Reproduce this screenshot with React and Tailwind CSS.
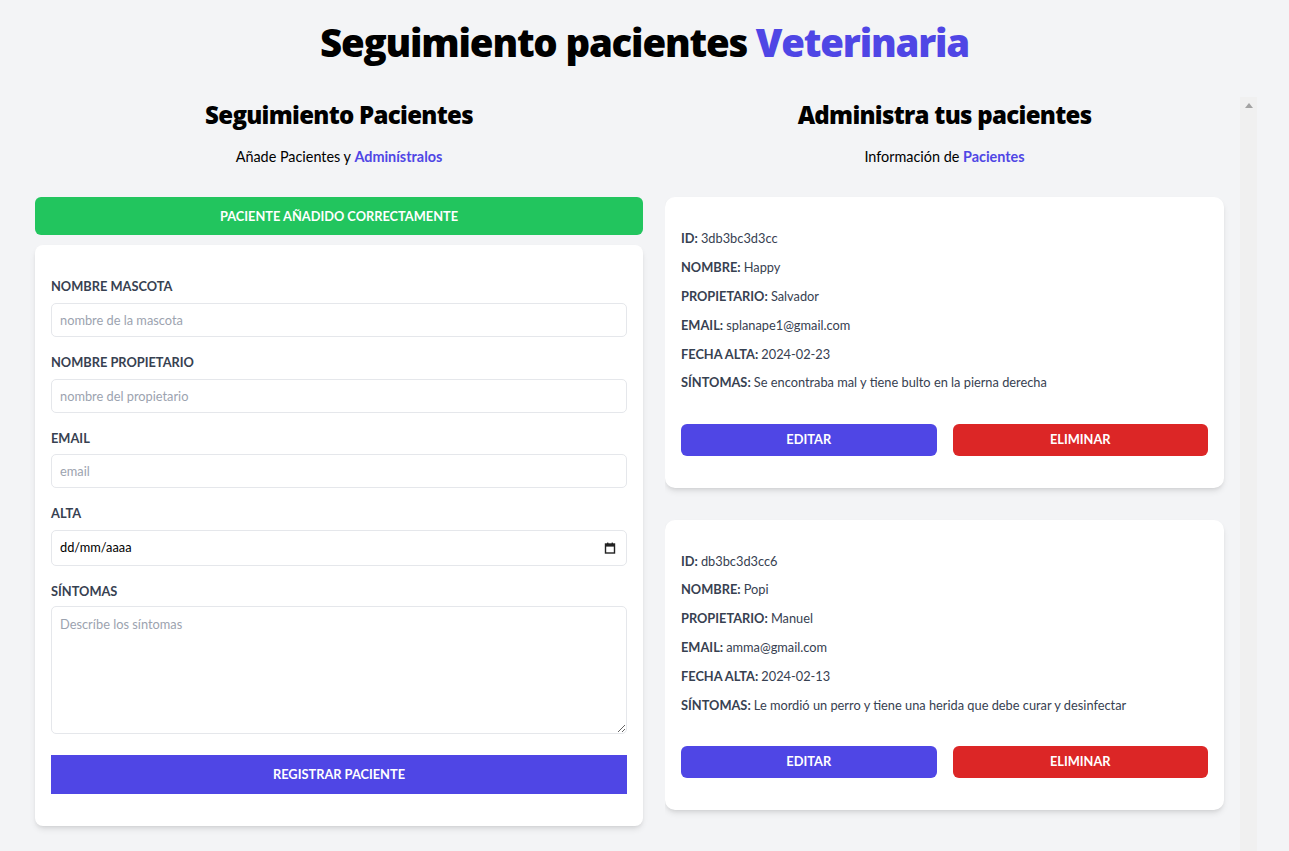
const pacientes = [
  {
    id: '3db3bc3d3cc',
    nombre: 'Happy',
    propietario: 'Salvador',
    email: 'splanape1@gmail.com',
    fecha: '2024-02-23',
    sintomas: 'Se encontraba mal y tiene bulto en la pierna derecha',
  },
  {
    id: 'db3bc3d3cc6',
    nombre: 'Popi',
    propietario: 'Manuel',
    email: 'amma@gmail.com',
    fecha: '2024-02-13',
    sintomas: 'Le mordió un perro y tiene una herida que debe curar y desinfectar',
  },
];

const heading = { fontFamily: '"Open Sans", Lato, sans-serif' };

function Field({ label, children }) {
  return (
    <div className="mb-4">
      <label className="block text-[12.8px] leading-[19.2px] font-bold uppercase text-[#374151]">
        {label}
      </label>
      {children}
    </div>
  );
}

function Paciente({ p }) {
  const rows = [
    ['ID', p.id],
    ['Nombre', p.nombre],
    ['Propietario', p.propietario],
    ['Email', p.email],
    ['Fecha Alta', p.fecha],
    ['Síntomas', p.sintomas],
  ];
  return (
    <div className="mb-8 rounded-[10px] bg-white px-4 pt-8 pb-8 shadow-md">
      {rows.map(([k, v]) => (
        <p
          key={k}
          className="mb-[9.6px] text-[12.8px] leading-[19.2px] font-bold uppercase text-[#374151]"
        >
          {k}: <span className="font-normal normal-case">{v}</span>
        </p>
      ))}
      <div className="mt-[31px] flex gap-4">
        <button className="h-8 flex-1 rounded-md bg-[#4f46e5] text-[12.8px] font-bold uppercase text-white">
          Editar
        </button>
        <button className="h-8 flex-1 rounded-md bg-[#dc2626] text-[12.8px] font-bold uppercase text-white">
          Eliminar
        </button>
      </div>
    </div>
  );
}

export default function App() {
  const inputCls =
    'mt-[6.4px] block h-[34px] w-full rounded-[5px] border border-[#e5e7eb] px-2 text-[12.8px] text-[#374151] placeholder-[#9ca3af] outline-none';

  return (
    <div
      className="h-[851px] overflow-hidden bg-[#f3f4f6]"
      style={{ fontFamily: 'Lato, "Open Sans", sans-serif' }}
    >
      <h1
        className="pt-[22px] text-center text-[38.4px] leading-[40px] font-extrabold tracking-[-1.2px] text-black"
        style={heading}
      >
        Seguimiento pacientes{' '}
        <span className="text-[#4f46e5]">Veterinaria</span>
      </h1>

      <div className="mt-[38px] flex pl-[35px]">
        <div className="w-[608px]">
          <h2
            className="text-center text-[24px] leading-[30px] font-extrabold tracking-[-0.7px] text-black"
            style={heading}
          >
            Seguimiento Pacientes
          </h2>
          <p className="mt-4 mb-[29px] text-center text-[14.4px] leading-[22.4px] text-black">
            Añade Pacientes y{' '}
            <span className="font-bold text-[#4f46e5]">Adminístralos</span>
          </p>

          <div className="mb-[10px] rounded-md bg-[#22c55e] py-[9.4px] text-center text-[12.8px] leading-[19.2px] font-bold uppercase text-white">
            Paciente añadido correctamente
          </div>

          <form className="rounded-lg bg-white px-4 pt-8 pb-8 shadow-md">
            <Field label="Nombre Mascota">
              <input className={inputCls} placeholder="nombre de la mascota" />
            </Field>
            <Field label="Nombre Propietario">
              <input className={inputCls} placeholder="nombre del propietario" />
            </Field>
            <Field label="Email">
              <input className={inputCls} placeholder="email" />
            </Field>
            <Field label="Alta">
              <div className="mt-[6.4px] flex h-9 w-full items-center rounded-[5px] border border-[#e5e7eb] px-2">
                <input
                  className="flex-1 text-[12.8px] text-black outline-none"
                  defaultValue="dd/mm/aaaa"
                  readOnly
                />
                <svg width="12" height="12" viewBox="0 0 12 12" className="mr-[2px]">
                  <rect x="1.5" y="2" width="9" height="9" fill="none" stroke="#222" strokeWidth="1.4" />
                  <rect x="1.5" y="2" width="9" height="2.6" fill="#222" />
                  <rect x="3" y="0.6" width="1.4" height="2" fill="#222" />
                  <rect x="7.6" y="0.6" width="1.4" height="2" fill="#222" />
                </svg>
              </div>
            </Field>
            <Field label="Síntomas">
              <textarea
                className="mt-[5.4px] block h-32 w-full rounded-[5px] border border-[#e5e7eb] px-2 py-2 text-[12.8px] text-[#374151] placeholder-[#9ca3af] outline-none"
                placeholder="Descríbe los síntomas"
              />
            </Field>
            <button
              type="button"
              className="mt-[21px] block w-full bg-[#4f46e5] py-[9.6px] text-[12.8px] leading-[19.2px] font-bold uppercase text-white"
            >
              Registrar paciente
            </button>
          </form>
        </div>

        <div className="ml-[22px] flex h-[754px]">
          <div className="-mt-[3px] w-[575px] overflow-y-auto pt-[3px] pr-4">
            <h2
              className="text-center text-[24px] leading-[30px] font-extrabold tracking-[-0.7px] text-black"
              style={heading}
            >
              Administra tus pacientes
            </h2>
            <p className="mt-4 mb-[29px] text-center text-[14.4px] leading-[22.4px] text-black">
              Información de{' '}
              <span className="font-bold text-[#4f46e5]">Pacientes</span>
            </p>
            {pacientes.map((p) => (
              <Paciente key={p.id} p={p} />
            ))}
          </div>
          <div className="-mt-[3px] flex w-[17px] justify-center bg-[#f0f0f0] pt-[6px]">
            <svg width="8" height="5" viewBox="0 0 8 5">
              <path d="M4 0 L8 5 L0 5 Z" fill="#a3a3a3" />
            </svg>
          </div>
        </div>
      </div>
    </div>
  );
}
